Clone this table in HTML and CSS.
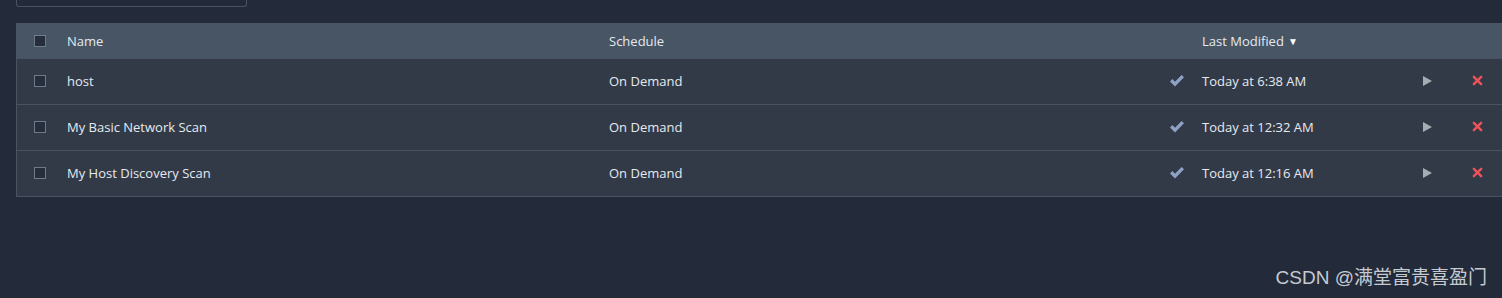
FILE: index.html
```html
<!DOCTYPE html>
<html lang="en">
<head>
    <meta charset="UTF-8">
    <title>My Scans</title>
    <link rel="stylesheet" href="styles.css">
</head>
<body>
    <div class="search-box"></div>

    <div class="scan-table">
        <div class="row head">
            <span class="cell"><span class="box"></span></span>
            <span class="cell">Name</span>
            <span class="cell">Schedule</span>
            <span class="cell"></span>
            <span class="cell">Last Modified <span class="sort">&#9660;</span></span>
            <span class="cell"></span>
            <span class="cell"></span>
        </div>

        <div class="row">
            <span class="cell"><span class="box"></span></span>
            <span class="cell">host</span>
            <span class="cell">On Demand</span>
            <span class="cell"><svg class="check" viewBox="0 0 16 16"><path d="M1 8.5l2.4-2.4 2.6 2.6 6.6-6.8 2.4 2.4-9 9.2z"/></svg></span>
            <span class="cell">Today at 6:38 AM</span>
            <span class="cell"><span class="play"></span></span>
            <span class="cell"><svg class="del" viewBox="0 0 12 12"><path d="M2 2l8 8M10 2l-8 8"/></svg></span>
        </div>

        <div class="row">
            <span class="cell"><span class="box"></span></span>
            <span class="cell">My Basic Network Scan</span>
            <span class="cell">On Demand</span>
            <span class="cell"><svg class="check" viewBox="0 0 16 16"><path d="M1 8.5l2.4-2.4 2.6 2.6 6.6-6.8 2.4 2.4-9 9.2z"/></svg></span>
            <span class="cell">Today at 12:32 AM</span>
            <span class="cell"><span class="play"></span></span>
            <span class="cell"><svg class="del" viewBox="0 0 12 12"><path d="M2 2l8 8M10 2l-8 8"/></svg></span>
        </div>

        <div class="row">
            <span class="cell"><span class="box"></span></span>
            <span class="cell">My Host Discovery Scan</span>
            <span class="cell">On Demand</span>
            <span class="cell"><svg class="check" viewBox="0 0 16 16"><path d="M1 8.5l2.4-2.4 2.6 2.6 6.6-6.8 2.4 2.4-9 9.2z"/></svg></span>
            <span class="cell">Today at 12:16 AM</span>
            <span class="cell"><span class="play"></span></span>
            <span class="cell"><svg class="del" viewBox="0 0 12 12"><path d="M2 2l8 8M10 2l-8 8"/></svg></span>
        </div>
    </div>

    <div class="watermark">CSDN @满堂富贵喜盈门</div>
</body>
</html>
```

FILE: styles.css
```css
html, body {
    height: 100%;
}
body {
    margin: 0;
    background-color: #232b3a;
    font-family: "Open Sans", "Noto Sans", sans-serif;
    font-size: 13px;
    color: #e4eaf0;
    overflow: hidden;
    position: relative;
}

/* filter input above the list, only its lower edge shows */
.search-box {
    width: 229px;
    height: 6px;
    margin-left: 16px;
    border: 1px solid #4a5262;
    border-top: none;
    border-radius: 0 0 3px 3px;
}

.scan-table {
    margin: 16px -4px 0 16px;
    border-left: 1px solid #4a5363;
    border-right: 1px solid #4a5363;
}

.row {
    display: grid;
    grid-template-columns: 50px 542px 556px 37px 216px 49px 1fr;
    align-items: center;
    height: 43px;
    padding-bottom: 2px;
    background-color: #333a47;
    border-bottom: 1px solid #4a5160;
}
.row.head {
    height: 35px;
    padding-bottom: 0;
    background-color: #485564;
}

.cell {
    display: flex;
    align-items: center;
    white-space: nowrap;
}
.cell:first-child {
    padding-left: 17px;
}
.row:not(.head) .cell:nth-child(4) {
    padding-left: 4px;
}
.row:not(.head) .cell:nth-child(6) {
    padding-left: 5px;
}
.row:not(.head) .cell:nth-child(7) {
    padding-left: 5px;
}

.box {
    display: inline-block;
    width: 10px;
    height: 10px;
    border: 1px solid #6e7b8d;
    background-color: #262e3c;
}

.sort {
    font-size: 10px;
    margin-left: 4px;
    color: #ffffff;
}

.check {
    width: 16px;
    height: 16px;
    fill: #8ea2c6;
}

.play {
    display: inline-block;
    width: 0;
    height: 0;
    border-top: 5px solid transparent;
    border-bottom: 5px solid transparent;
    border-left: 9px solid #a4adb4;
}

.del {
    width: 11px;
    height: 11px;
    fill: none;
    stroke: #f0525a;
    stroke-width: 2.6;
    stroke-linecap: round;
}

.watermark {
    position: absolute;
    right: 15px;
    bottom: 9px;
    font-family: "Liberation Sans", "Noto Sans CJK SC", sans-serif;
    font-size: 19px;
    color: #c5cad1;
}
```
